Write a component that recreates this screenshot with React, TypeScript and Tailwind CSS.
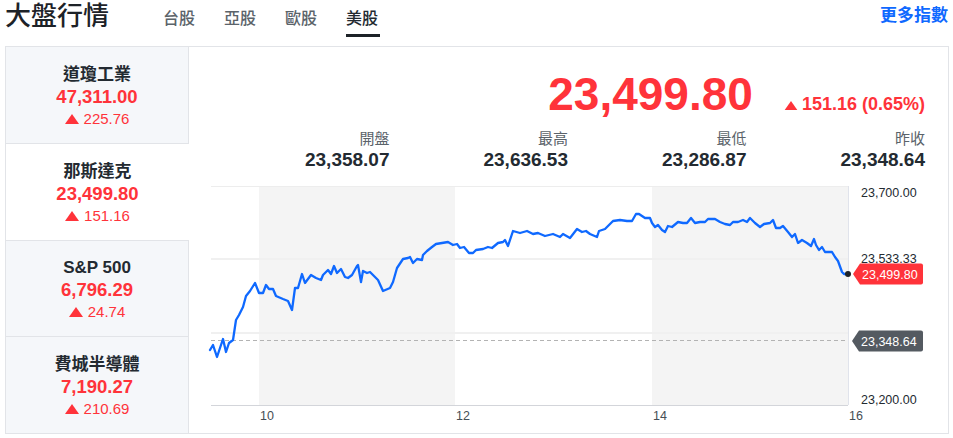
import React from "react";

const LINE =
  "210,350 213,345 217,357 223,339 226,352 229,343 233,340 236,320 239,315 243,307 246,296 250,291 255,283 259,293 263,293 266,285 269,289 273,289 276,296 283,299 288,301 292,310 295,288 298,288 302,274 305,283 311,275 316,278 321,280 323,275 328,270 331,274 334,266 337,273 341,269 345,277 348,278 352,275 357,266 358,265 361,282 363,271 367,273 370,272 375,277 378,280 383,291 390,288 393,282 397,268 403,259 408,258 410,257 413,263 417,259 422,260 423,255 427,251 432,247 436,244 442,243 448,242 453,245 457,244 460,248 464,247 469,253 473,253 476,250 483,249 488,247 492,248 498,243 503,242 505,240 508,246 513,231 520,233 527,231 533,234 538,233 545,236 553,234 560,237 563,234 570,238 577,229 582,232 586,231 590,234 597,237 599,231 605,229 613,221 620,220 627,221 632,221 636,214 639,214 645,218 650,218 652,223 655,227 658,225 662,230 665,232 668,226 672,227 678,222 683,223 687,223 691,218 695,223 700,222 705,222 708,219 715,219 720,222 725,224 730,225 733,222 738,222 743,220 747,222 750,218 755,223 760,227 764,224 770,223 773,220 776,228 780,228 783,226 788,232 792,237 795,234 798,243 802,240 807,243 811,246 814,239 816,245 819,250 822,247 825,252 832,252 835,257 838,261 842,272 844,274 848,274";

const items = [
  { name: "道瓊工業", value: "47,311.00", change: "225.76", active: false },
  { name: "那斯達克", value: "23,499.80", change: "151.16", active: true },
  { name: "S&P 500", value: "6,796.29", change: "24.74", active: false },
  { name: "費城半導體", value: "7,190.27", change: "210.69", active: false },
];

const stats = [
  { label: "開盤", value: "23,358.07" },
  { label: "最高", value: "23,636.53" },
  { label: "最低", value: "23,286.87" },
  { label: "昨收", value: "23,348.64" },
];

const tabs = ["台股", "亞股", "歐股", "美股"];

function Up({ w = 14, h = 10 }: { w?: number; h?: number }) {
  return (
    <svg width={w} height={h} viewBox="0 0 14 10" className="inline-block">
      <polygon points="0,10 7,0 14,10" fill="#ff333a" />
    </svg>
  );
}

export default function App() {
  return (
    <div className="w-[953px] h-[438px] bg-white overflow-hidden font-['Liberation_Sans','Noto_Sans_CJK_TC',sans-serif] text-[#232a31]">
      <header className="h-[46px] flex items-start pl-[5px] pr-[5px]">
        <h1 className="text-[26px] leading-[32px] font-medium text-[#1d2228]">大盤行情</h1>
        <nav className="flex gap-[29px] ml-[54px] mt-[7px]">
          {tabs.map((t) => (
            <div key={t} className="relative">
              <span
                className={
                  t === "美股"
                    ? "text-[16px] leading-[22px] font-medium text-[#232a31]"
                    : "text-[16px] leading-[22px] font-medium text-[#5b636a]"
                }
              >
                {t}
              </span>
              {t === "美股" && (
                <div className="absolute left-0 right-[-2px] top-[27px] h-[3px] bg-[#1d2228]" />
              )}
            </div>
          ))}
        </nav>
        <a className="ml-auto mt-[5px] text-[17px] leading-[22px] font-bold text-[#0f69ff]">更多指數</a>
      </header>

      <div className="ml-[5px] w-[944px] h-[388px] border border-[#e2e4e8] flex">
        <div className="w-[183px] flex flex-col">
          {items.map((it, i) => (
            <div
              key={it.name}
              className={
                (it.active ? "bg-white " : "bg-[#f5f7fa] border-r border-[#e2e4e8] ") +
                (i < items.length - 1 ? "border-b border-[#e2e4e8] " : "") +
                "flex-1 flex flex-col items-center justify-center pt-[4px]"
              }
            >
              <div className="text-[17px] leading-[22px] font-semibold text-[#232a31]">{it.name}</div>
              <div className="text-[18.5px] leading-[22px] font-bold text-[#ff333a]">{it.value}</div>
              <div className="flex items-center gap-[5px] text-[15px] leading-[22px] text-[#ff333a]">
                <Up w={14} h={10} />
                <span>{it.change}</span>
              </div>
            </div>
          ))}
        </div>

        <div className="flex-1 flex flex-col">
          <div className="flex items-baseline justify-end pt-[24px] pr-[23px]">
            <span className="text-[46px] leading-[46px] font-bold text-[#ff333a]">23,499.80</span>
            <span className="ml-[31px] flex items-baseline gap-[4px] text-[18px] leading-[22px] font-bold text-[#ff333a]">
              <Up w={14} h={9} />
              <span>151.16 (0.65%)</span>
            </span>
          </div>

          <div className="grid grid-cols-4 mt-[12px] pl-[22px] pr-[23px]">
            {stats.map((s) => (
              <div key={s.label} className="text-right">
                <div className="text-[15px] leading-[20px] text-[#5b636a]">{s.label}</div>
                <div className="text-[19px] leading-[22px] font-bold text-[#232a31]">{s.value}</div>
              </div>
            ))}
          </div>

          <svg className="block mt-[15px]" width="759" height="246" viewBox="189 186 759 246">
            <rect x="259" y="186" width="196" height="219" fill="#f4f4f4" />
            <rect x="652" y="186" width="196" height="219" fill="#f4f4f4" />
            <line x1="211" y1="186.5" x2="848" y2="186.5" stroke="#ededed" />
            <line x1="211" y1="259" x2="848" y2="259" stroke="#f0f0f0" strokeWidth="2" />
            <line x1="211" y1="333" x2="848" y2="333" stroke="#f0f0f0" strokeWidth="2" />
            <line x1="211" y1="340.5" x2="848" y2="340.5" stroke="#b3b3b3" strokeDasharray="4 3" />
            <line x1="211" y1="405.5" x2="848" y2="405.5" stroke="#d3d5da" />
            <line x1="848.5" y1="186" x2="848.5" y2="405" stroke="#e0e3eb" />
            <polyline points={LINE} fill="none" stroke="#0f69ff" strokeWidth="2.3" strokeLinejoin="round" strokeLinecap="round" />
            <circle cx="848" cy="274" r="3" fill="#1d2228" />

            <g fontSize="12.5" fill="#232a31">
              <text x="861" y="196.5">23,700.00</text>
              <text x="861" y="263">23,533.33</text>
              <text x="861" y="339.5">23,366.67</text>
              <text x="861" y="403.5">23,200.00</text>
            </g>

            <path d="M853,274 L860,263.5 H921 Q923,263.5 923,265.5 V282.5 Q923,284.5 921,284.5 H860 Z" fill="#ff333a" />
            <text x="862" y="278.5" fontSize="12.5" fill="#ffffff">23,499.80</text>

            <path d="M852,341 L859,330.5 H921 Q923,330.5 923,332.5 V349.5 Q923,351.5 921,351.5 H859 Z" fill="#545a61" />
            <text x="861" y="345.5" fontSize="12.5" fill="#ffffff">23,348.64</text>

            <g fontSize="12.5" fill="#464e56">
              <text x="260" y="420">10</text>
              <text x="456" y="420">12</text>
              <text x="653" y="420">14</text>
              <text x="849" y="420">16</text>
            </g>
          </svg>
        </div>
      </div>
    </div>
  );
}
